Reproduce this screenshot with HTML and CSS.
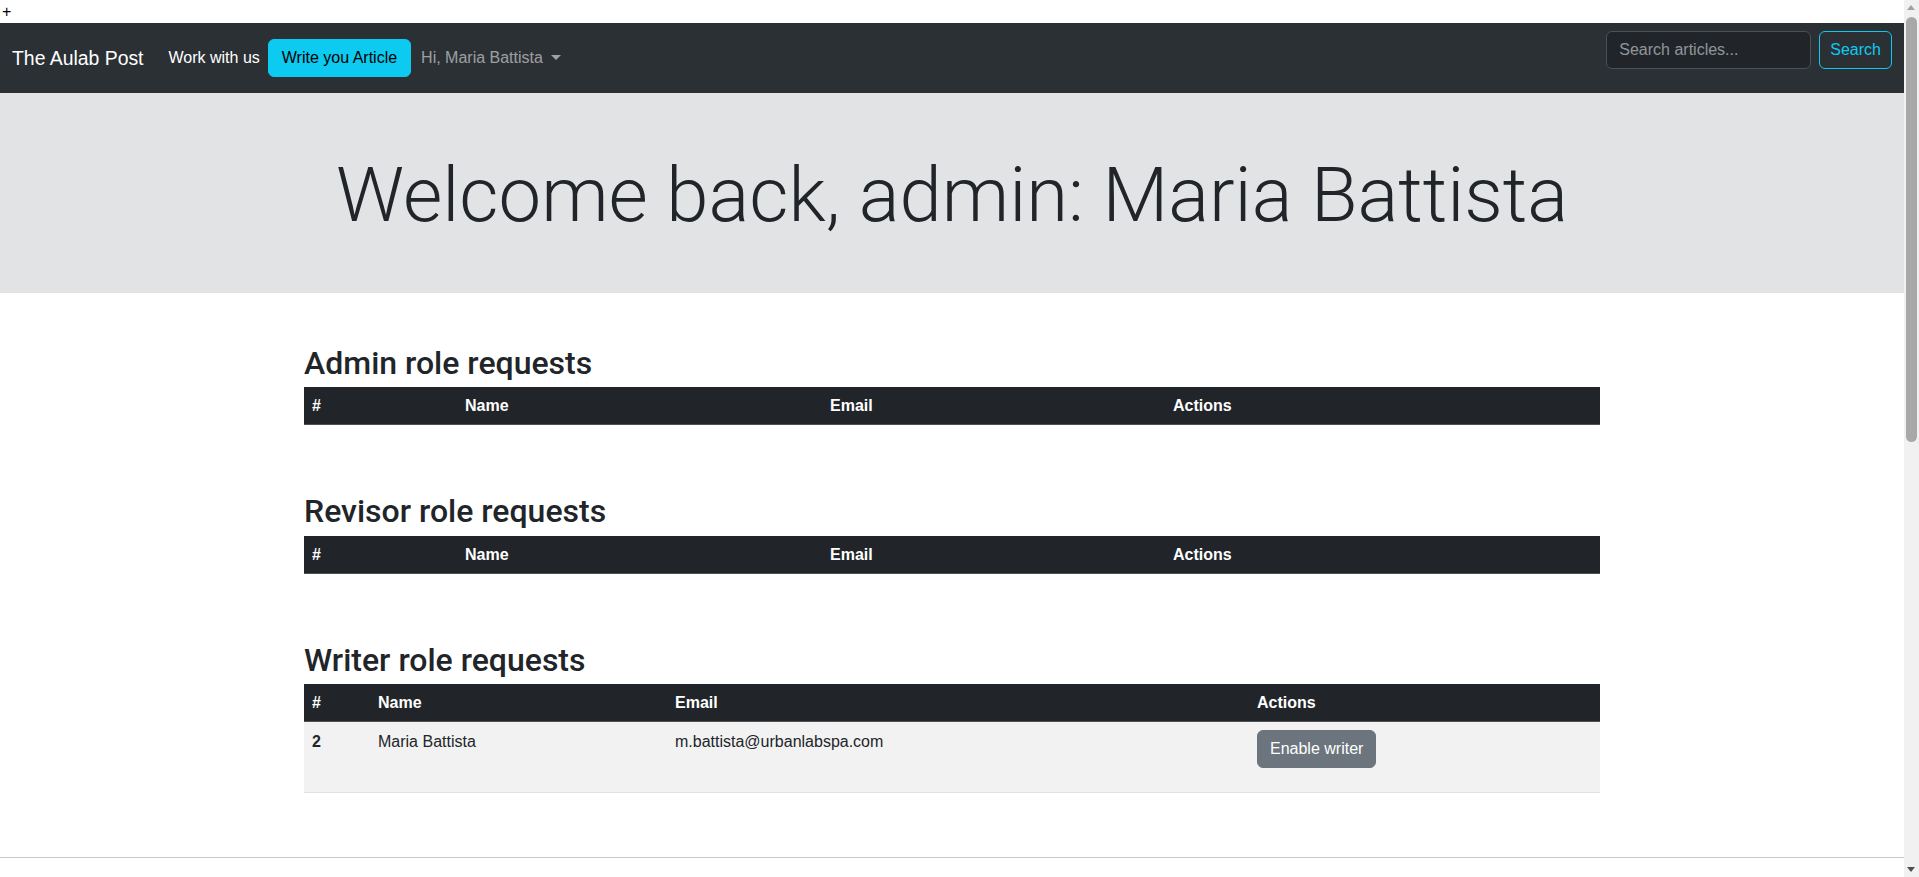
FILE: index.html
```html
<!DOCTYPE html>
<html lang="en">
<head>
<meta charset="utf-8">
<title>The Aulab Post</title>
<link rel="stylesheet" href="styles.css">
</head>
<body>
<div class="topline">+</div>
<nav class="navbar">
  <div class="nav-left">
    <a class="brand" href="#">The Aulab Post</a>
    <a class="nav-link active" href="#">Work with us</a>
    <a class="btn btn-info btn-write" href="#">Write you Article</a>
    <a class="nav-link dropdown" href="#">Hi, Maria Battista<span class="caret"></span></a>
  </div>
  <form class="search">
    <input class="search-input" type="search" placeholder="Search articles...">
    <button class="btn btn-outline-info btn-search" type="button">Search</button>
  </form>
</nav>
<header class="hero">
  <h1>Welcome back, admin: Maria Battista</h1>
</header>
<main class="container">
  <section class="block">
    <h2>Admin role requests</h2>
    <table class="table">
      <colgroup><col class="c-a1"><col class="c-a2"><col class="c-a3"><col class="c-a4"></colgroup>
      <thead><tr><th>#</th><th>Name</th><th>Email</th><th>Actions</th></tr></thead>
      <tbody></tbody>
    </table>
  </section>
  <section class="block">
    <h2>Revisor role requests</h2>
    <table class="table">
      <colgroup><col class="c-a1"><col class="c-a2"><col class="c-a3"><col class="c-a4"></colgroup>
      <thead><tr><th>#</th><th>Name</th><th>Email</th><th>Actions</th></tr></thead>
      <tbody></tbody>
    </table>
  </section>
  <section class="block">
    <h2>Writer role requests</h2>
    <table class="table">
      <colgroup><col class="c-w1"><col class="c-w2"><col class="c-w3"><col class="c-w4"></colgroup>
      <thead><tr><th>#</th><th>Name</th><th>Email</th><th>Actions</th></tr></thead>
      <tbody>
        <tr class="striped">
          <th>2</th>
          <td>Maria Battista</td>
          <td>m.battista@urbanlabspa.com</td>
          <td><form class="action-form"><button class="btn btn-secondary" type="button">Enable writer</button></form></td>
        </tr>
      </tbody>
    </table>
  </section>
</main>
<footer class="footer"></footer>
<div class="scrollbar" aria-hidden="true">
  <span class="sb-arrow sb-up"></span>
  <span class="sb-thumb"></span>
  <span class="sb-arrow sb-down"></span>
</div>
</body>
</html>
```
FILE: styles.css
```css
* { box-sizing: border-box; }
html, body { margin: 0; padding: 0; }
body {
  font-family: "Liberation Sans", Arial, sans-serif;
  font-size: 16px;
  line-height: 1.5;
  color: #212529;
  background: #fff;
  padding-right: 15px;
}
.topline {
  height: 23px;
  line-height: 23px;
  padding-left: 2px;
  font-size: 16px;
  color: #000;
}
.navbar {
  display: flex;
  justify-content: space-between;
  height: 70px;
  padding: 8px 12px;
  background: #2b3035;
}
.nav-left {
  display: flex;
  align-items: center;
  height: 54px;
}
.brand {
  font-size: 19.4px;
  color: #fff;
  text-decoration: none;
  margin-right: 17px;
  line-height: 30px;
}
.nav-link {
  color: rgba(255,255,255,.55);
  text-decoration: none;
  padding: 8px;
  font-size: 16px;
}
.nav-link.active { color: #fff; }
.dropdown { padding-left: 10px; }
.caret {
  display: inline-block;
  margin-left: 8px;
  vertical-align: 3px;
  border-top: 5px solid rgba(255,255,255,.55);
  border-left: 5px solid transparent;
  border-right: 5px solid transparent;
}
.btn {
  display: inline-block;
  font-family: inherit;
  font-size: 16px;
  line-height: 24px;
  padding: 6px 12px;
  border: 1px solid transparent;
  border-radius: 6px;
  text-decoration: none;
  cursor: pointer;
}
.btn-info { background: #0dcaf0; border-color: #0dcaf0; color: #000; }
.btn-write { padding: 6px 13px; }
.btn-outline-info { background: transparent; border-color: #0dcaf0; color: #0dcaf0; }
.btn-search { padding: 6px 10px; }
.btn-secondary { background: #6c757d; border-color: #6c757d; color: #fff; }
.search {
  display: flex;
  align-self: flex-start;
  margin: 0;
}
.search-input {
  width: 205px;
  height: 38px;
  margin-right: 8px;
  padding: 6px 12px;
  font-family: inherit;
  font-size: 16px;
  color: #dee2e6;
  background: #212529;
  border: 1px solid #495057;
  border-radius: 6px;
  outline: none;
}
.search-input::placeholder { color: rgba(222,226,230,.6); }
.hero {
  background: #e2e3e5;
  padding: 48px;
  text-align: center;
}
.hero h1 {
  margin: 0 0 2px;
  padding-top: 6px;
  font-family: Roboto, "Liberation Sans", sans-serif;
  font-weight: 300;
  font-size: 76px;
  line-height: 96px;
  color: #212529;
}
.container {
  width: 1296px;
  margin: 0 auto;
  padding: 48px 0 48px;
}
.block + .block { margin-top: 64px; }
.block h2 {
  margin: 0 0 5px;
  padding-top: 3px;
  font-family: Roboto, "Liberation Sans", sans-serif;
  font-weight: 500;
  font-size: 32px;
  line-height: 38.4px;
}
.table {
  width: 100%;
  table-layout: fixed;
  border-collapse: collapse;
  margin-bottom: 16px;
  line-height: 21px;
}
.table thead th {
  background: #212529;
  color: #fff;
  font-weight: 700;
  text-align: left;
  padding: 8px;
  border-bottom: 1px solid #4d5154;
}
.table tbody th, .table tbody td {
  text-align: left;
  vertical-align: top;
  padding: 8px;
  line-height: 24px;
  border-bottom: 1px solid #dee2e6;
}
.table tbody th { font-weight: 700; }
.striped > * { background: #f2f2f2; }
.action-form { margin: 0 0 16px; }
.c-a1 { width: 153px; }
.c-a2 { width: 365px; }
.c-a3 { width: 343px; }
.c-a4 { width: 435px; }
.c-w1 { width: 66px; }
.c-w2 { width: 297px; }
.c-w3 { width: 582px; }
.c-w4 { width: 351px; }
.footer {
  border-top: 1px solid #c8c9ca;
  height: 900px;
}
.scrollbar {
  position: fixed;
  top: 0;
  right: 0;
  bottom: 0;
  width: 15px;
  background: #f1f1f1;
}
.sb-arrow {
  position: absolute;
  left: 3px;
  border-left: 4.5px solid transparent;
  border-right: 4.5px solid transparent;
}
.sb-up { top: 5px; border-bottom: 5px solid #a3a3a3; }
.sb-down { bottom: 5px; border-top: 5px solid #505050; }
.sb-thumb {
  position: absolute;
  top: 17px;
  left: 2px;
  width: 11px;
  height: 425px;
  background: #a8a8a8;
  border-radius: 6px;
}
```
